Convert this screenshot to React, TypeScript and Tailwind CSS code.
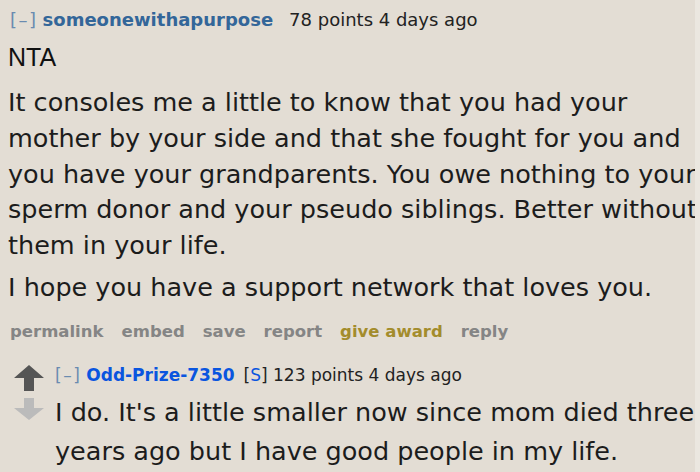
export default function App() {
  const body = "text-[25.5px] leading-[35.75px] text-[#1c1c1c] whitespace-nowrap";
  return (
    <div className="flex h-[472px] w-[700px] overflow-hidden bg-[#e3ddd4] font-['DejaVu_Sans',Verdana,sans-serif]">
      <div className="w-[695px] pl-[8px] pt-[8px]">
        {/* parent comment */}
        <div className="flex items-baseline text-[18px] leading-[24px]">
          <span className="ml-[2px] tracking-[1.5px] text-[#6a8bb0]">[–]</span>
          <span className="ml-[5px] font-bold text-[#336699]">someonewithapurpose</span>
          <span className="ml-[16px] text-[#222]">78 points 4 days ago</span>
        </div>
        <p className="mt-[10px] font-['Liberation_Sans',Arial,sans-serif] text-[25px] leading-[30px] text-[#111]">NTA</p>
        <p className={`mt-[13px] ${body}`}>
          It consoles me a little to know that you had your
          <br />
          mother by your side and that she fought for you and
          <br />
          you have your grandparents. You owe nothing to your
          <br />
          sperm donor and your pseudo siblings. Better without
          <br />
          them in your life.
        </p>
        <p className={`mt-[6.5px] ${body}`}>I hope you have a support network that loves you.</p>
        <div className="mt-[13.5px] ml-[2px] flex gap-[18px] text-[16.5px] font-bold leading-[24px] text-[#858585]">
          <span>permalink</span>
          <span>embed</span>
          <span>save</span>
          <span>report</span>
          <span className="text-[#a38c2c]">give award</span>
          <span>reply</span>
        </div>

        {/* child comment */}
        <div className="mt-[19px] flex">
          <div className="ml-[6px] flex w-[30px] flex-col pt-[2px]">
            <svg width="30" height="26" viewBox="0 0 30 26">
              <path d="M15 0 L30 13 L20 13 L20 26 L10 26 L10 13 L0 13 Z" fill="#555" />
            </svg>
            <svg className="mt-[7px]" width="30" height="22" viewBox="0 0 30 22">
              <path d="M10 0 L20 0 L20 10 L30 10 L15 22 L0 10 L10 10 Z" fill="#bbb" />
            </svg>
          </div>
          <div className="ml-[11px]">
            <div className="flex items-baseline text-[17px] leading-[24px]">
              <span className="tracking-[1.5px] text-[#6a8bb0]">[–]</span>
              <span className="ml-[5px] font-bold text-[#0a55df]">Odd-Prize-7350</span>
              <span className="ml-[9px] text-[#222]">
                [<span className="text-[#0a55df]">S</span>] 123 points 4 days ago
              </span>
            </div>
            <p className="mt-[6.5px] text-[25.5px] leading-[38.5px] text-[#1c1c1c] whitespace-nowrap">
              I do. It's a little smaller now since mom died three
              <br />
              years ago but I have good people in my life.
            </p>
          </div>
        </div>
      </div>
      <div className="flex-1 bg-[#ebe7e0]" />
    </div>
  );
}
